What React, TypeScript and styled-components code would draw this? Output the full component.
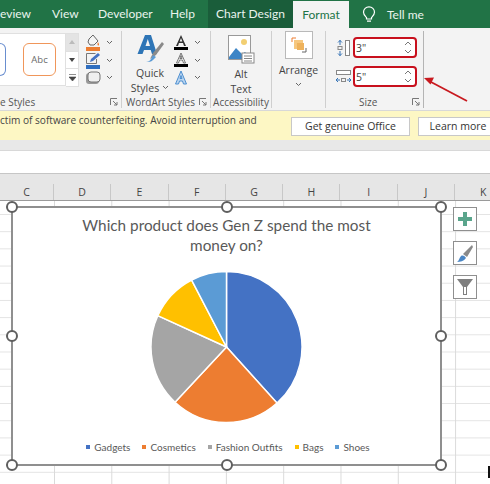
import React from "react";
import styled, { createGlobalStyle } from "styled-components";

const GlobalStyle = createGlobalStyle`
  html, body { margin: 0; padding: 0; background: #fff; }
  body { font-family: "Open Sans", "Noto Sans", sans-serif; overflow: hidden; }
`;

const tabs = [
  { label: "eview", width: 52 },
  { label: "View", width: 46 },
  { label: "Developer", width: 72 },
  { label: "Help", width: 38 },
];

const columns = ["C", "D", "E", "F", "G", "H", "I", "J", "K"];

const legend = [
  { label: "Gadgets", color: "#4472c4" },
  { label: "Cosmetics", color: "#ed7d31" },
  { label: "Fashion Outfits", color: "#a5a5a5" },
  { label: "Bags", color: "#ffc000" },
  { label: "Shoes", color: "#5b9bd5" },
];

const slices = [
  { from: 0, to: 138, color: "#4472c4" },
  { from: 138, to: 223, color: "#ed7d31" },
  { from: 223, to: 294.5, color: "#a5a5a5" },
  { from: 294.5, to: 332.5, color: "#ffc000" },
  { from: 332.5, to: 360, color: "#5b9bd5" },
];

const slicePath = (from: number, to: number) => {
  const r = 75.5;
  const point = (deg: number) => {
    const a = (deg * Math.PI) / 180;
    return `${(75.5 + r * Math.sin(a)).toFixed(2)} ${(76 - r * Math.cos(a)).toFixed(2)}`;
  };
  return `M75.5 76L${point(from)}A${r} ${r} 0 ${to - from > 180 ? 1 : 0} 1 ${point(to)}Z`;
};

const Chevron = () => (
  <svg width="7" height="5" viewBox="0 0 7 5">
    <path d="M1 1l2.5 2.5L6 1" fill="none" stroke="#666" strokeWidth="1" />
  </svg>
);

const Launcher = () => (
  <svg width="8" height="8" viewBox="0 0 8 8">
    <path d="M.5 7V.5H7M3 3l4 4M7 4v3H4" fill="none" stroke="#777" strokeWidth="1" />
  </svg>
);

const Spinner = () => (
  <SpinnerBox>
    <svg width="8" height="5" viewBox="0 0 8 5">
      <path d="M1 4l3-3 3 3" fill="none" stroke="#777" />
    </svg>
    <svg width="8" height="5" viewBox="0 0 8 5">
      <path d="M1 1l3 3 3-3" fill="none" stroke="#777" />
    </svg>
  </SpinnerBox>
);

const App = () => {
  return (
    <Page>
      <GlobalStyle />
      <TabBar>
        {tabs.map((t) => (
          <Tab key={t.label} $width={t.width}>
            {t.label}
          </Tab>
        ))}
        <ChartDesign>Chart Design</ChartDesign>
        <FormatTab>Format</FormatTab>
        <TellMe>
          <svg width="14" height="17" viewBox="0 0 14 17">
            <path
              d="M4.5 11.5C3 10 1.5 8.8 1.5 6.3a5.5 5.5 0 0 1 11 0c0 2.5-1.5 3.7-3 5.2v1.5h-5zM5 15.2h4"
              fill="none"
              stroke="#fff"
              strokeWidth="1.2"
            />
          </svg>
          Tell me
        </TellMe>
      </TabBar>

      <Ribbon>
        <Group $width={122}>
          <GroupBody>
            <SwatchRow>
              <Swatch $color="#4472c4" $cut />
              <Swatch $color="#ed7d31">Abc</Swatch>
            </SwatchRow>
            <ScrollColumn>
              <ScrollButton $disabled>
                <svg width="6" height="4" viewBox="0 0 6 4"><path d="M0 4l3-4 3 4z" fill="#bbb" /></svg>
              </ScrollButton>
              <ScrollButton>
                <svg width="6" height="4" viewBox="0 0 6 4"><path d="M0 0l3 4 3-4z" fill="#444" /></svg>
              </ScrollButton>
              <ScrollButton>
                <svg width="7" height="7" viewBox="0 0 7 7"><path d="M0 .5h7M0 3l3.5 4L7 3z" fill="#444" stroke="#444" strokeWidth=".6" /></svg>
              </ScrollButton>
            </ScrollColumn>
            <IconColumn>
              <IconRow>
                <svg width="16" height="17" viewBox="0 0 16 17">
                  <path d="M4 5l4-4 5 6-4 4H5L3 8z" fill="#f5f5f5" stroke="#666" />
                  <path d="M13 8c1 2 1.5 3 .5 3.5S12 10 13 8z" fill="#ed7d31" />
                  <rect x="1" y="13" width="14" height="4" fill="#ed7d31" />
                </svg>
                <Chevron />
              </IconRow>
              <IconRow>
                <svg width="16" height="17" viewBox="0 0 16 17">
                  <path d="M1.5 1.5h9M1.5 1.5v10h10V7" fill="none" stroke="#777" />
                  <path d="M5 10l1-3 7-6 2 2-7 6z" fill="#4472c4" />
                  <rect x="1" y="13" width="14" height="4" fill="#2f6ebf" />
                </svg>
                <Chevron />
              </IconRow>
              <IconRow>
                <svg width="16" height="14" viewBox="0 0 16 14">
                  <rect x="1" y="2" width="13" height="11" rx="3" fill="#999" />
                  <rect x="3" y="1" width="12" height="10" rx="3" fill="#f0f0f0" stroke="#777" />
                </svg>
                <Chevron />
              </IconRow>
            </IconColumn>
          </GroupBody>
          <GroupLabel $align="left">
            e Styles
            <Launcher />
          </GroupLabel>
        </Group>

        <Group $width={89}>
          <GroupBody>
            <QuickStyles>
              <svg width="30" height="29" viewBox="0 0 30 29">
                <path d="M10 1h6l6 19h-5l-1.3-4H9L7.5 20H2.5zM10.5 12h4.5l-2.2-7z" fill="#2e75b6" />
                <path d="M15 25l3-6 9-11 2 2-8 11z" fill="#8a8a8a" />
                <path d="M11 28c2 0 4-1 5-3l2-4 3 2-3 3c-2 2-4 2-7 2z" fill="#5b9bd5" />
              </svg>
              <IconLabel>Quick</IconLabel>
              <IconLabel>
                Styles <Chevron />
              </IconLabel>
            </QuickStyles>
            <IconColumn>
              <IconRow>
                <svg width="16" height="16" viewBox="0 0 16 16">
                  <path d="M8 0L3 11h2l1-3h4l1 3h2zM6.7 6.5L8 3l1.3 3.5z" fill="#333" />
                  <rect x="1" y="12" width="14" height="3" fill="#000" />
                </svg>
                <Chevron />
              </IconRow>
              <IconRow>
                <svg width="16" height="16" viewBox="0 0 16 16">
                  <path d="M8 1L3.5 11h2l1-3h3l1 3h2zM6.9 6.5L8 3.5l1.1 3z" fill="#fff" stroke="#555" strokeWidth=".8" />
                  <rect x="1" y="12" width="14" height="3" fill="#000" />
                </svg>
                <Chevron />
              </IconRow>
              <IconRow>
                <svg width="16" height="16" viewBox="0 0 16 16">
                  <path d="M8 1L2.5 14h3l1-3h3l1 3h3zM7 8.5L8 5.500l1 3z" fill="#bcd6f0" stroke="#4d8fd0" strokeWidth="1" />
                </svg>
                <Chevron />
              </IconRow>
            </IconColumn>
          </GroupBody>
          <GroupLabel $align="right">
            WordArt Styles
            <Launcher />
          </GroupLabel>
        </Group>

        <Group $width={61}>
          <GroupBody>
            <StackedButton $top={4}>
              <AltIcon width="27" height="29" viewBox="0 0 27 29">
                <rect x=".5" y=".5" width="22" height="24" fill="#fff" stroke="#999" />
                <circle cx="16" cy="7" r="3" fill="#f2cf72" />
                <path d="M1 22l7-9 6 6 3-2 5 5v2H1z" fill="#3d85c6" />
                <rect x="14" y="18" width="12" height="10" fill="#fff" stroke="#888" />
                <path d="M16 21h8M16 23.5h8M16 26h8" stroke="#888" />
              </AltIcon>
              <IconLabel>Alt</IconLabel>
              <IconLabel>Text</IconLabel>
            </StackedButton>
          </GroupBody>
          <GroupLabel $align="center">Accessibility</GroupLabel>
        </Group>

        <Group $width={54}>
          <GroupBody>
            <StackedButton $top={0}>
              <ArrangeBox>
                <svg width="16" height="16" viewBox="0 0 16 16">
                  <path d="M1 5V1h4" fill="none" stroke="#ed7d31" />
                  <rect x="3" y="3" width="9" height="9" fill="#f6c77f" />
                  <rect x="6" y="6" width="7" height="7" fill="#eeb25c" />
                  <path d="M15 11v4h-4" fill="none" stroke="#666" />
                </svg>
              </ArrangeBox>
              <ArrangeLabel>Arrange</ArrangeLabel>
              <Chevron />
            </StackedButton>
          </GroupBody>
          <GroupLabel $align="center">&nbsp;</GroupLabel>
        </Group>

        <Group $width={98} $strong>
          <SizeBody>
            <SizeRow>
              <svg width="15" height="16" viewBox="0 0 15 16">
                <rect x="9.5" y=".5" width="4" height="15" fill="#fff" stroke="#888" />
                <path d="M4 0v5M2 2.5L4 .5l2 2M4 11v5M2 13.5l2 2 2-2" fill="none" stroke="#3573b5" />
                <rect x="2" y="6.5" width="4" height="3" fill="none" stroke="#888" />
              </svg>
              <SizeInput>
                3"
                <Spinner />
              </SizeInput>
            </SizeRow>
            <SizeRow>
              <svg width="15" height="16" viewBox="0 0 15 16">
                <rect x=".5" y="1.5" width="14" height="4" fill="#fff" stroke="#888" />
                <path d="M0 11h4M2 9l-2 2 2 2M11 11h4M13 9l2 2-2 2" fill="none" stroke="#3573b5" />
                <rect x="5.5" y="9.5" width="4" height="3" fill="none" stroke="#888" />
              </svg>
              <SizeInput>
                5"
                <Spinner />
              </SizeInput>
            </SizeRow>
          </SizeBody>
          <SizeLabel>
            Size
            <Launcher />
          </SizeLabel>
        </Group>

        <Arrow width="50" height="30" viewBox="0 0 50 30">
          <path d="M44 26L8 7" stroke="#c8191f" strokeWidth="1.8" fill="none" />
          <path d="M1 3l10-.5-3.5 7z" fill="#c8191f" />
        </Arrow>
      </Ribbon>

      <Notice>
        <NoticeText>ctim of software counterfeiting. Avoid interruption and</NoticeText>
        <NoticeButton $width={119}>Get genuine Office</NoticeButton>
        <NoticeButton $width={80}>Learn more</NoticeButton>
      </Notice>

      <Strip />
      <FormulaBar />

      <ColumnHeader>
        {columns.map((c, i) => (
          <ColumnCell key={c} $first={i === 0}>
            {c}
          </ColumnCell>
        ))}
      </ColumnHeader>

      <Sheet>
        <Chart>
          <Handle $x="0%" $y="0%" />
          <Handle $x="50%" $y="0%" />
          <Handle $x="100%" $y="0%" />
          <Handle $x="0%" $y="50%" />
          <Handle $x="100%" $y="50%" />
          <Handle $x="0%" $y="100%" />
          <Handle $x="50%" $y="100%" />
          <Handle $x="100%" $y="100%" />
          <ChartTitle>Which product does Gen Z spend the most money on?</ChartTitle>
          <svg width="152" height="152" viewBox="0 0 152 152">
            {slices.map((s) => (
              <path
                key={s.color}
                d={slicePath(s.from, s.to)}
                fill={s.color}
                stroke="#fff"
                strokeWidth="1.5"
              />
            ))}
          </svg>
          <Legend>
            {legend.map((l) => (
              <LegendItem key={l.label}>
                <LegendKey $color={l.color} />
                {l.label}
              </LegendItem>
            ))}
          </Legend>
        </Chart>

        <SideButtons>
          <SideButton>
            <svg width="16" height="16" viewBox="0 0 16 16">
              <path d="M6 1h4v5h5v4h-5v5H6v-5H1V6h5z" fill="#5aa58c" />
            </svg>
          </SideButton>
          <SideButton>
            <svg width="18" height="19" viewBox="0 0 18 19">
              <path d="M7 10l9-9 1 2-6 10z" fill="#8a8a8a" />
              <path d="M1 18c2-1 2-4 4-6 2-1 4 0 5 2-2 3-6 4-9 4z" fill="#4a86c5" />
            </svg>
          </SideButton>
          <SideButton>
            <svg width="18" height="18" viewBox="0 0 18 18">
              <path d="M1 1h16l-6 8v8H7V9z" fill="#7f7f7f" />
              <path d="M8 9h2v7H8z" fill="#fff" />
            </svg>
          </SideButton>
        </SideButtons>
        <CursorMark />
      </Sheet>
    </Page>
  );
};

export default App;

const Page = styled.div`
  width: 490px;
  height: 484px;
  overflow: hidden;
  display: flex;
  flex-direction: column;
  color: #444;
`;

const TabBar = styled.div`
  height: 28px;
  flex: none;
  display: flex;
  align-items: flex-end;
  background: #217346;
  color: #eaf3ee;
  font-family: Lato, "Open Sans", sans-serif;
  font-size: 12px;
`;

const Tab = styled.div<{ $width: number }>`
  width: ${({ $width }) => $width}px;
  height: 28px;
  line-height: 28px;
  flex: none;
`;

const ChartDesign = styled.div`
  width: 85px;
  height: 28px;
  line-height: 28px;
  text-align: center;
  background: #1a5d3a;
  flex: none;
`;

const FormatTab = styled.div`
  width: 56px;
  height: 27px;
  line-height: 27px;
  text-align: center;
  background: #f3f3f3;
  color: #217346;
  flex: none;
`;

const TellMe = styled.div`
  display: flex;
  align-items: center;
  gap: 11px;
  height: 28px;
  margin-left: 13px;
`;

const Ribbon = styled.div`
  position: relative;
  height: 82px;
  flex: none;
  display: flex;
  background: #f3f3f3;
  border-bottom: 1px solid #d8d8d8;
  font-size: 10.5px;
  color: #444;
`;

const Group = styled.div<{ $width: number; $strong?: boolean }>`
  width: ${({ $width }) => $width}px;
  box-sizing: border-box;
  flex: none;
  display: flex;
  flex-direction: column;
  margin: 3px 0 2px;
  border-right: 1px solid ${({ $strong }) => ($strong ? "#b4b4b4" : "#cfcfcf")};
`;

const GroupBody = styled.div`
  flex: 1;
  display: flex;
  min-height: 0;
`;

const GroupLabel = styled.div<{ $align: string }>`
  height: 12px;
  display: flex;
  align-items: center;
  white-space: nowrap;
  font-size: 10px;
  color: #555;
  justify-content: ${({ $align }) => ($align === "center" ? "center" : "space-between")};
  padding: ${({ $align }) => ($align === "right" ? "0 3px 0 4px" : $align === "left" ? "0 3px 0 0" : "0")};
`;

const SwatchRow = styled.div`
  width: 66px;
  height: 53px;
  box-sizing: border-box;
  margin-top: 2px;
  background: #fff;
  border: 1px solid #e0e0e0;
  border-left: none;
  display: flex;
  align-items: center;
  gap: 17px;
`;

const Swatch = styled.div<{ $color: string; $cut?: boolean }>`
  width: ${({ $cut }) => ($cut ? "6px" : "33px")};
  height: 33px;
  box-sizing: border-box;
  flex: none;
  display: flex;
  align-items: center;
  justify-content: center;
  background: #fff;
  border: 1px solid ${({ $color }) => $color};
  border-left: ${({ $cut }) => ($cut ? "none" : undefined)};
  border-radius: ${({ $cut }) => ($cut ? "0 6px 6px 0" : "6px")};
  font-size: 9.5px;
  color: #444;
  opacity: 0.8;
`;

const ScrollColumn = styled.div`
  width: 13px;
  height: 53px;
  margin-top: 2px;
  display: flex;
  flex-direction: column;
  flex: none;
`;

const ScrollButton = styled.div<{ $disabled?: boolean }>`
  flex: 1;
  box-sizing: border-box;
  display: flex;
  align-items: center;
  justify-content: center;
  background: ${({ $disabled }) => ($disabled ? "#e4e4e4" : "#fff")};
  border: 1px solid #e0e0e0;
  border-left: none;
  margin-bottom: -1px;
`;

const IconColumn = styled.div`
  display: flex;
  flex-direction: column;
  justify-content: space-between;
  margin: 3px 0 0 6px;
  height: 52px;
`;

const IconRow = styled.div`
  display: flex;
  align-items: center;
  gap: 5px;
  height: 17px;
`;

const QuickStyles = styled.div`
  width: 34px;
  margin-left: 11px;
  display: flex;
  flex-direction: column;
  align-items: center;
  padding-top: 3px;
  flex: none;
  svg:first-child { margin-bottom: 3px; flex: none; }
`;

const IconLabel = styled.div`
  display: flex;
  align-items: center;
  gap: 3px;
  height: 15px;
  line-height: 15px;
  color: #444;
  white-space: nowrap;
`;

const StackedButton = styled.div<{ $top: number }>`
  flex: 1;
  display: flex;
  flex-direction: column;
  align-items: center;
  padding-top: ${({ $top }) => $top}px;
`;

const AltIcon = styled.svg`
  margin-bottom: 3px;
  flex: none;
`;

const ArrangeBox = styled.div`
  width: 28px;
  height: 28px;
  box-sizing: border-box;
  background: #fff;
  border: 1px solid #b9b9b9;
  display: flex;
  align-items: center;
  justify-content: center;
  margin-bottom: 3px;
`;

const ArrangeLabel = styled.div`
  height: 16px;
  line-height: 16px;
  margin-bottom: 4px;
`;

const SizeBody = styled.div`
  flex: 1;
  display: flex;
  flex-direction: column;
  gap: 8px;
  padding: 6px 0 0 10px;
`;

const SizeRow = styled.div`
  display: flex;
  align-items: center;
  gap: 2px;
`;

const SizeInput = styled.div`
  width: 64px;
  height: 21px;
  box-sizing: border-box;
  display: flex;
  align-items: center;
  justify-content: space-between;
  padding: 0 3px 0 1px;
  background: #fff;
  border: 2px solid #c8101d;
  border-radius: 4px;
  font-size: 10.5px;
  color: #444;
`;

const SpinnerBox = styled.div`
  display: flex;
  flex-direction: column;
  gap: 3px;
`;

const SizeLabel = styled.div`
  height: 12px;
  display: flex;
  align-items: center;
  justify-content: space-between;
  padding: 0 3px 0 33px;
  font-size: 10px;
  color: #555;
`;

const Arrow = styled.svg`
  position: absolute;
  left: 423px;
  top: 47px;
`;

const Notice = styled.div`
  height: 29px;
  flex: none;
  display: flex;
  align-items: flex-start;
  background: #fdf7c4;
  overflow: hidden;
  font-size: 10.5px;
  color: #444;
`;

const NoticeText = styled.div`
  width: 291px;
  flex: none;
  white-space: nowrap;
  font-size: 10.1px;
  line-height: 19px;
`;

const NoticeButton = styled.div<{ $width: number }>`
  width: ${({ $width }) => $width}px;
  height: 19px;
  box-sizing: border-box;
  flex: none;
  margin: 6px 8px 0 0;
  background: #fff;
  border: 1px solid #c8c8c8;
  text-align: center;
  line-height: 17px;
  color: #333;
`;

const Strip = styled.div`
  height: 10px;
  flex: none;
  background: #e8e8e8;
  border-bottom: 1px solid #d8d8d8;
`;

const FormulaBar = styled.div`
  height: 22px;
  flex: none;
  background: #fff;
  border-bottom: 1px solid #c6c6c6;
`;

const ColumnHeader = styled.div`
  height: 26px;
  flex: none;
  display: flex;
  background: #e6e6e6;
  border-bottom: 1px solid #9a9a9a;
`;

const ColumnCell = styled.div<{ $first: boolean }>`
  width: ${({ $first }) => ($first ? "54px" : "57.3px")};
  box-sizing: border-box;
  flex: none;
  margin-top: 10px;
  border-right: 1px solid #c8c8c8;
  text-align: center;
  font-size: 10.5px;
  line-height: 16px;
  color: #444;
`;

const Sheet = styled.div`
  position: relative;
  flex: 1;
  background-color: #fff;
  background-image: linear-gradient(to right, #dadada 1px, transparent 1px),
    linear-gradient(to bottom, #e3e3e3 1px, transparent 1px);
  background-size: 57.3px 17.2px;
  background-position: 54px 13px;
`;

const Chart = styled.div`
  position: absolute;
  left: 12px;
  top: 6px;
  width: 429px;
  height: 258px;
  background: #fff;
  box-shadow: 0 0 0 1px #8f8f8f, inset 0 0 0 1px #8f8f8f;
  display: flex;
  flex-direction: column;
  align-items: center;
`;

const Handle = styled.div<{ $x: string; $y: string }>`
  position: absolute;
  left: ${({ $x }) => $x};
  top: ${({ $y }) => $y};
  width: 8px;
  height: 8px;
  transform: translate(-50%, -50%);
  background: #fff;
  border: 2px solid #5f5f5f;
  border-radius: 50%;
`;

const ChartTitle = styled.div`
  width: 300px;
  margin: 8px 0 16px;
  text-align: center;
  font-family: Lato, "Open Sans", sans-serif;
  font-size: 15.3px;
  line-height: 20px;
  color: #595959;
`;

const Legend = styled.div`
  display: flex;
  align-items: center;
  gap: 12px;
  margin: 18px 0 0 3px;
  font-family: Lato, "Open Sans", sans-serif;
  font-size: 10px;
  color: #595959;
`;

const LegendItem = styled.div`
  display: flex;
  align-items: center;
  gap: 4px;
`;

const LegendKey = styled.span<{ $color: string }>`
  width: 4px;
  height: 4px;
  background: ${({ $color }) => $color};
`;

const SideButtons = styled.div`
  position: absolute;
  left: 453px;
  top: 6px;
  display: flex;
  flex-direction: column;
  gap: 10px;
`;

const SideButton = styled.div`
  width: 24px;
  height: 24px;
  box-sizing: border-box;
  display: flex;
  align-items: center;
  justify-content: center;
  background: #fff;
  border: 1px solid #8f8f8f;
`;

const CursorMark = styled.div`
  position: absolute;
  right: 0;
  top: 265px;
  width: 2px;
  height: 12px;
  background: #111;
`;
